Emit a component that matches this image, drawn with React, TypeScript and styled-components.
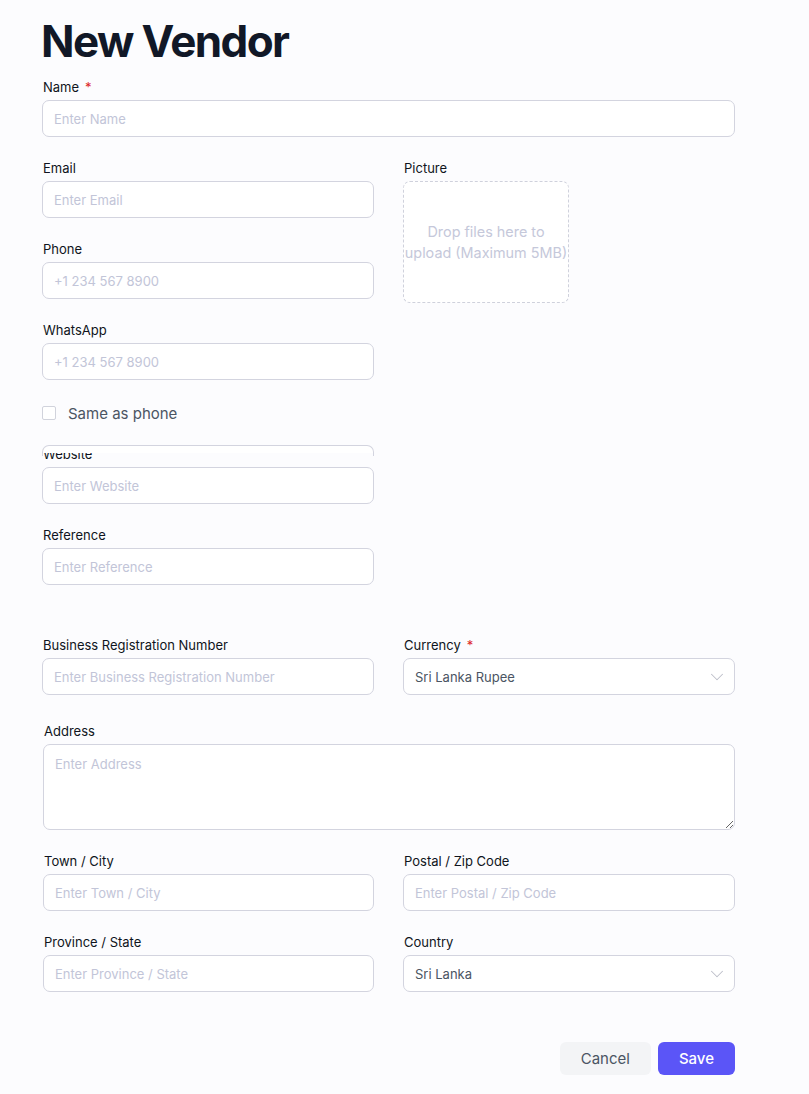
import React from "react";
import styled, { createGlobalStyle } from "styled-components";

const Global = createGlobalStyle`
  html, body { margin: 0; padding: 0; background: #fcfcfe; }
  body { font-family: Inter, "Noto Sans", sans-serif; color: #111827; }
  * { box-sizing: border-box; }
`;

const Page = styled.div`
  width: 809px;
  padding: 15px 0 19px 42px;
`;

const Form = styled.div`
  width: 693px;
  display: flex;
  flex-direction: column;
`;

const Title = styled.h1`
  margin: 0 0 10px -1px;
  font-size: 44px;
  line-height: 52px;
  font-weight: 700;
  color: #111827;
  letter-spacing: -1.6px;
`;

const Section = styled.div<{ $top?: number; $shift?: number }>`
  margin-top: ${(p) => p.$top ?? 0}px;
  padding-left: ${(p) => p.$shift ?? 0}px;
`;

const Grid = styled.div<{ $left?: number }>`
  display: grid;
  grid-template-columns: ${(p) => p.$left ?? 332}px 332px;
  column-gap: 29px;
  row-gap: 21px;
  align-items: start;
`;

const Column = styled.div`
  display: flex;
  flex-direction: column;
  gap: 21px;
`;

const FieldWrap = styled.div`
  position: relative;
  display: flex;
  flex-direction: column;
`;

const Label = styled.label`
  display: block;
  font-size: 13px;
  line-height: 20px;
  font-weight: 400;
  color: #0f1420;
  margin-bottom: 3px;
  padding-left: 1px;
`;

const Required = styled.span`
  color: #dc2626;
  margin-left: 6px;
`;

const Input = styled.input`
  width: 100%;
  height: 37px;
  border: 1px solid #d3d4df;
  border-radius: 7px;
  background: #ffffff;
  padding: 0 11px;
  font-family: Inter, sans-serif;
  font-size: 13px;
  color: #111827;
  outline: none;
  &::placeholder { color: #c2c5d8; }
`;

const TextArea = styled.textarea`
  width: 100%;
  height: 86px;
  border: 1px solid #d3d4df;
  border-radius: 7px;
  background: #ffffff;
  padding: 10px 11px;
  font-family: Inter, sans-serif;
  font-size: 13px;
  line-height: 18px;
  resize: vertical;
  outline: none;
  display: block;
  &::placeholder { color: #c2c5d8; }
`;

const SelectBox = styled.div`
  height: 37px;
  border: 1px solid #d3d4df;
  border-radius: 7px;
  background: #ffffff;
  padding: 0 6px 0 11px;
  display: flex;
  align-items: center;
  justify-content: space-between;
  font-size: 13px;
  color: #4b5563;
`;

const Drop = styled.div`
  width: 166px;
  height: 122px;
  border: 1px dashed #cfd1dc;
  border-radius: 7px;
  background: #ffffff;
  display: flex;
  align-items: center;
  justify-content: center;
  text-align: center;
  font-size: 14.4px;
  line-height: 21px;
  color: #c5c8da;
  white-space: nowrap;
`;

const CheckRow = styled.div`
  display: flex;
  align-items: center;
  gap: 12px;
  height: 22px;
  margin: 1px 0 -1px;
  font-size: 15px;
  color: #4b5563;
`;

const Box = styled.span`
  width: 14px;
  height: 14px;
  border: 1px solid #d1d3dc;
  border-radius: 2px;
  background: #ffffff;
`;

const Ghost = styled.div`
  position: absolute;
  top: 1px;
  left: 0;
  right: 0;
  height: 11px;
  border: 1px solid #d3d4df;
  border-bottom: none;
  border-radius: 7px 7px 0 0;
  background: linear-gradient(#ffffff 0 7px, rgba(255, 255, 255, 0) 7px);
  z-index: 1;
`;

const Actions = styled.div`
  display: flex;
  justify-content: flex-end;
  gap: 7px;
  margin-top: 50px;
`;

const Button = styled.button<{ $primary?: boolean }>`
  height: 33px;
  padding: 0 21px;
  border: none;
  border-radius: 6px;
  font-family: Inter, sans-serif;
  font-size: 15px;
  font-weight: ${(p) => (p.$primary ? 500 : 400)};
  background: ${(p) => (p.$primary ? "#5b55f7" : "#f3f4f6")};
  color: ${(p) => (p.$primary ? "#ffffff" : "#4b5563")};
  cursor: pointer;
`;

const Chevron = () => (
  <svg width="22" height="22" viewBox="0 0 24 24" fill="none" stroke="#bcbec9" strokeWidth="1.1" strokeLinecap="round" strokeLinejoin="round">
    <path d="m6 9 6 6 6-6" />
  </svg>
);

type FieldProps = { label: string; placeholder: string; required?: boolean };

const Field = ({ label, placeholder, required }: FieldProps) => (
  <FieldWrap>
    <Label>
      {label}
      {required && <Required>*</Required>}
    </Label>
    <Input placeholder={placeholder} />
  </FieldWrap>
);

const SelectField = ({ label, value, required }: { label: string; value: string; required?: boolean }) => (
  <FieldWrap>
    <Label>
      {label}
      {required && <Required>*</Required>}
    </Label>
    <SelectBox>
      <span>{value}</span>
      <Chevron />
    </SelectBox>
  </FieldWrap>
);

export default function App() {
  return (
    <>
      <Global />
      <Page>
        <Form>
          <Title>New Vendor</Title>
          <Field label="Name" placeholder="Enter Name" required />
          <Section $top={21}>
            <Grid>
              <Column>
                <Field label="Email" placeholder="Enter Email" />
                <Field label="Phone" placeholder="+1 234 567 8900" />
                <Field label="WhatsApp" placeholder="+1 234 567 8900" />
                <CheckRow>
                  <Box />
                  <span>Same as phone</span>
                </CheckRow>
                <FieldWrap>
                  <Ghost />
                  <Label>Website</Label>
                  <Input placeholder="Enter Website" />
                </FieldWrap>
                <Field label="Reference" placeholder="Enter Reference" />
              </Column>
              <FieldWrap>
                <Label>Picture</Label>
                <Drop>
                  Drop files here to
                  <br />
                  upload (Maximum 5MB)
                </Drop>
              </FieldWrap>
            </Grid>
          </Section>
          <Section $top={50}>
            <Grid>
              <Field label="Business Registration Number" placeholder="Enter Business Registration Number" />
              <SelectField label="Currency" value="Sri Lanka Rupee" required />
            </Grid>
          </Section>
          <Section $top={26} $shift={1}>
            <FieldWrap>
              <Label>Address</Label>
              <TextArea placeholder="Enter Address" />
            </FieldWrap>
          </Section>
          <Section $top={21} $shift={1}>
            <Grid $left={331}>
              <Field label="Town / City" placeholder="Enter Town / City" />
              <Field label="Postal / Zip Code" placeholder="Enter Postal / Zip Code" />
              <Field label="Province / State" placeholder="Enter Province / State" />
              <SelectField label="Country" value="Sri Lanka" />
            </Grid>
          </Section>
          <Actions>
            <Button>Cancel</Button>
            <Button $primary>Save</Button>
          </Actions>
        </Form>
      </Page>
    </>
  );
}
